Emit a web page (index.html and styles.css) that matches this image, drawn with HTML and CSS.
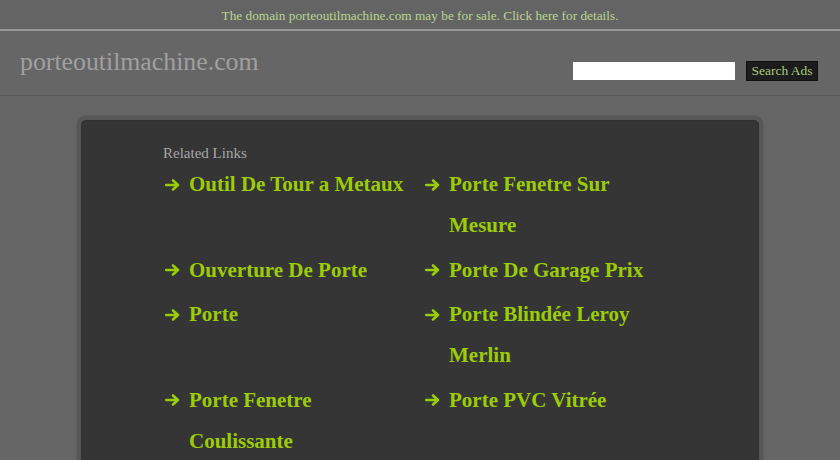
FILE: index.html
```html
<!DOCTYPE html>
<html lang="fr">
<head>
<meta charset="utf-8">
<title>porteoutilmachine.com</title>
<link rel="stylesheet" href="styles.css">
</head>
<body>
<div class="topbar"><a href="#" class="sale">The domain porteoutilmachine.com may be for sale. Click here for details.</a></div>
<header class="header">
  <div class="logo">porteoutilmachine.com</div>
  <form class="search">
    <input type="text" class="search-input">
    <button type="button" class="search-btn">Search Ads</button>
  </form>
</header>
<main class="card">
  <h2 class="related">Related Links</h2>
  <ul class="links">
    <li class="item"><span class="arrow"><svg width="15" height="12" viewBox="0 0 15 12"><path d="M1.2 6H13M8 1.5L13 6L8 10.5" fill="none" stroke="#9ccc07" stroke-width="2.6" stroke-linecap="round" stroke-linejoin="round"/></svg></span><a href="#" class="txt">Outil De Tour a Metaux</a></li>
    <li class="item"><span class="arrow"><svg width="15" height="12" viewBox="0 0 15 12"><path d="M1.2 6H13M8 1.5L13 6L8 10.5" fill="none" stroke="#9ccc07" stroke-width="2.6" stroke-linecap="round" stroke-linejoin="round"/></svg></span><a href="#" class="txt">Porte Fenetre Sur Mesure</a></li>
    <li class="item"><span class="arrow"><svg width="15" height="12" viewBox="0 0 15 12"><path d="M1.2 6H13M8 1.5L13 6L8 10.5" fill="none" stroke="#9ccc07" stroke-width="2.6" stroke-linecap="round" stroke-linejoin="round"/></svg></span><a href="#" class="txt">Ouverture De Porte</a></li>
    <li class="item"><span class="arrow"><svg width="15" height="12" viewBox="0 0 15 12"><path d="M1.2 6H13M8 1.5L13 6L8 10.5" fill="none" stroke="#9ccc07" stroke-width="2.6" stroke-linecap="round" stroke-linejoin="round"/></svg></span><a href="#" class="txt">Porte De Garage Prix</a></li>
    <li class="item"><span class="arrow"><svg width="15" height="12" viewBox="0 0 15 12"><path d="M1.2 6H13M8 1.5L13 6L8 10.5" fill="none" stroke="#9ccc07" stroke-width="2.6" stroke-linecap="round" stroke-linejoin="round"/></svg></span><a href="#" class="txt">Porte</a></li>
    <li class="item"><span class="arrow"><svg width="15" height="12" viewBox="0 0 15 12"><path d="M1.2 6H13M8 1.5L13 6L8 10.5" fill="none" stroke="#9ccc07" stroke-width="2.6" stroke-linecap="round" stroke-linejoin="round"/></svg></span><a href="#" class="txt">Porte Blindée Leroy Merlin</a></li>
    <li class="item"><span class="arrow"><svg width="15" height="12" viewBox="0 0 15 12"><path d="M1.2 6H13M8 1.5L13 6L8 10.5" fill="none" stroke="#9ccc07" stroke-width="2.6" stroke-linecap="round" stroke-linejoin="round"/></svg></span><a href="#" class="txt">Porte Fenetre Coulissante</a></li>
    <li class="item"><span class="arrow"><svg width="15" height="12" viewBox="0 0 15 12"><path d="M1.2 6H13M8 1.5L13 6L8 10.5" fill="none" stroke="#9ccc07" stroke-width="2.6" stroke-linecap="round" stroke-linejoin="round"/></svg></span><a href="#" class="txt">Porte PVC Vitrée</a></li>
  </ul>
</main>
</body>
</html>
```
FILE: styles.css
```css
* { box-sizing: border-box; }
html, body { margin: 0; padding: 0; }
body {
  background: #666666;
  font-family: "Liberation Serif", "Times New Roman", serif;
  overflow: hidden;
}
.topbar {
  height: 31px;
  background: #646464;
  border-bottom: 2px solid #979797;
  text-align: center;
  line-height: 30px;
}
.sale {
  color: #bad58f;
  font-size: 13.3px;
  text-decoration: none;
}
.header {
  height: 65px;
  border-bottom: 1px solid #575757;
  display: flex;
  justify-content: space-between;
  align-items: flex-start;
  padding: 0 22px 0 20px;
}
.logo {
  color: #a0a0a0;
  font-size: 25.8px;
  margin-top: 16px;
  line-height: 30px;
}
.search {
  display: flex;
  align-items: center;
  gap: 11px;
  margin: 30px 0 0;
}
.search-input {
  width: 162px;
  height: 18px;
  border: none;
  background: #ffffff;
  padding: 0;
  margin: 0;
}
.search-btn {
  width: 72px;
  height: 20px;
  padding: 0;
  margin: 0;
  background: #1c1c1c;
  border: 1px solid #111;
  color: #a9c97a;
  font-family: "Liberation Serif", serif;
  font-size: 13.5px;
  line-height: 18px;
}
.card {
  margin: 20px 77px 0;
  min-height: 420px;
  background: #353535;
  border: 4px solid #575757;
  border-bottom: none;
  border-radius: 9px 9px 0 0;
  box-shadow: 0 0 2px #4a4a4a, inset 0 0 2px #262626;
  padding: 24px 0 0 82px;
}
.related {
  margin: 0;
  color: #a6a6a6;
  font-size: 15px;
  font-weight: normal;
  line-height: 18px;
}
.links {
  list-style: none;
  margin: 2px 0 0 2px;
  padding: 0;
  display: grid;
  grid-template-columns: 260px 260px;
  row-gap: 3.5px;
}
.item {
  display: flex;
  align-items: flex-start;
  padding-right: 12px;
}
.arrow {
  flex: none;
  width: 24px;
  height: 41px;
  display: flex;
  align-items: center;
}
.arrow svg { display: block; }
.txt {
  color: #9ccc07;
  font-weight: bold;
  font-size: 21px;
  line-height: 41px;
  text-decoration: none;
}
```
